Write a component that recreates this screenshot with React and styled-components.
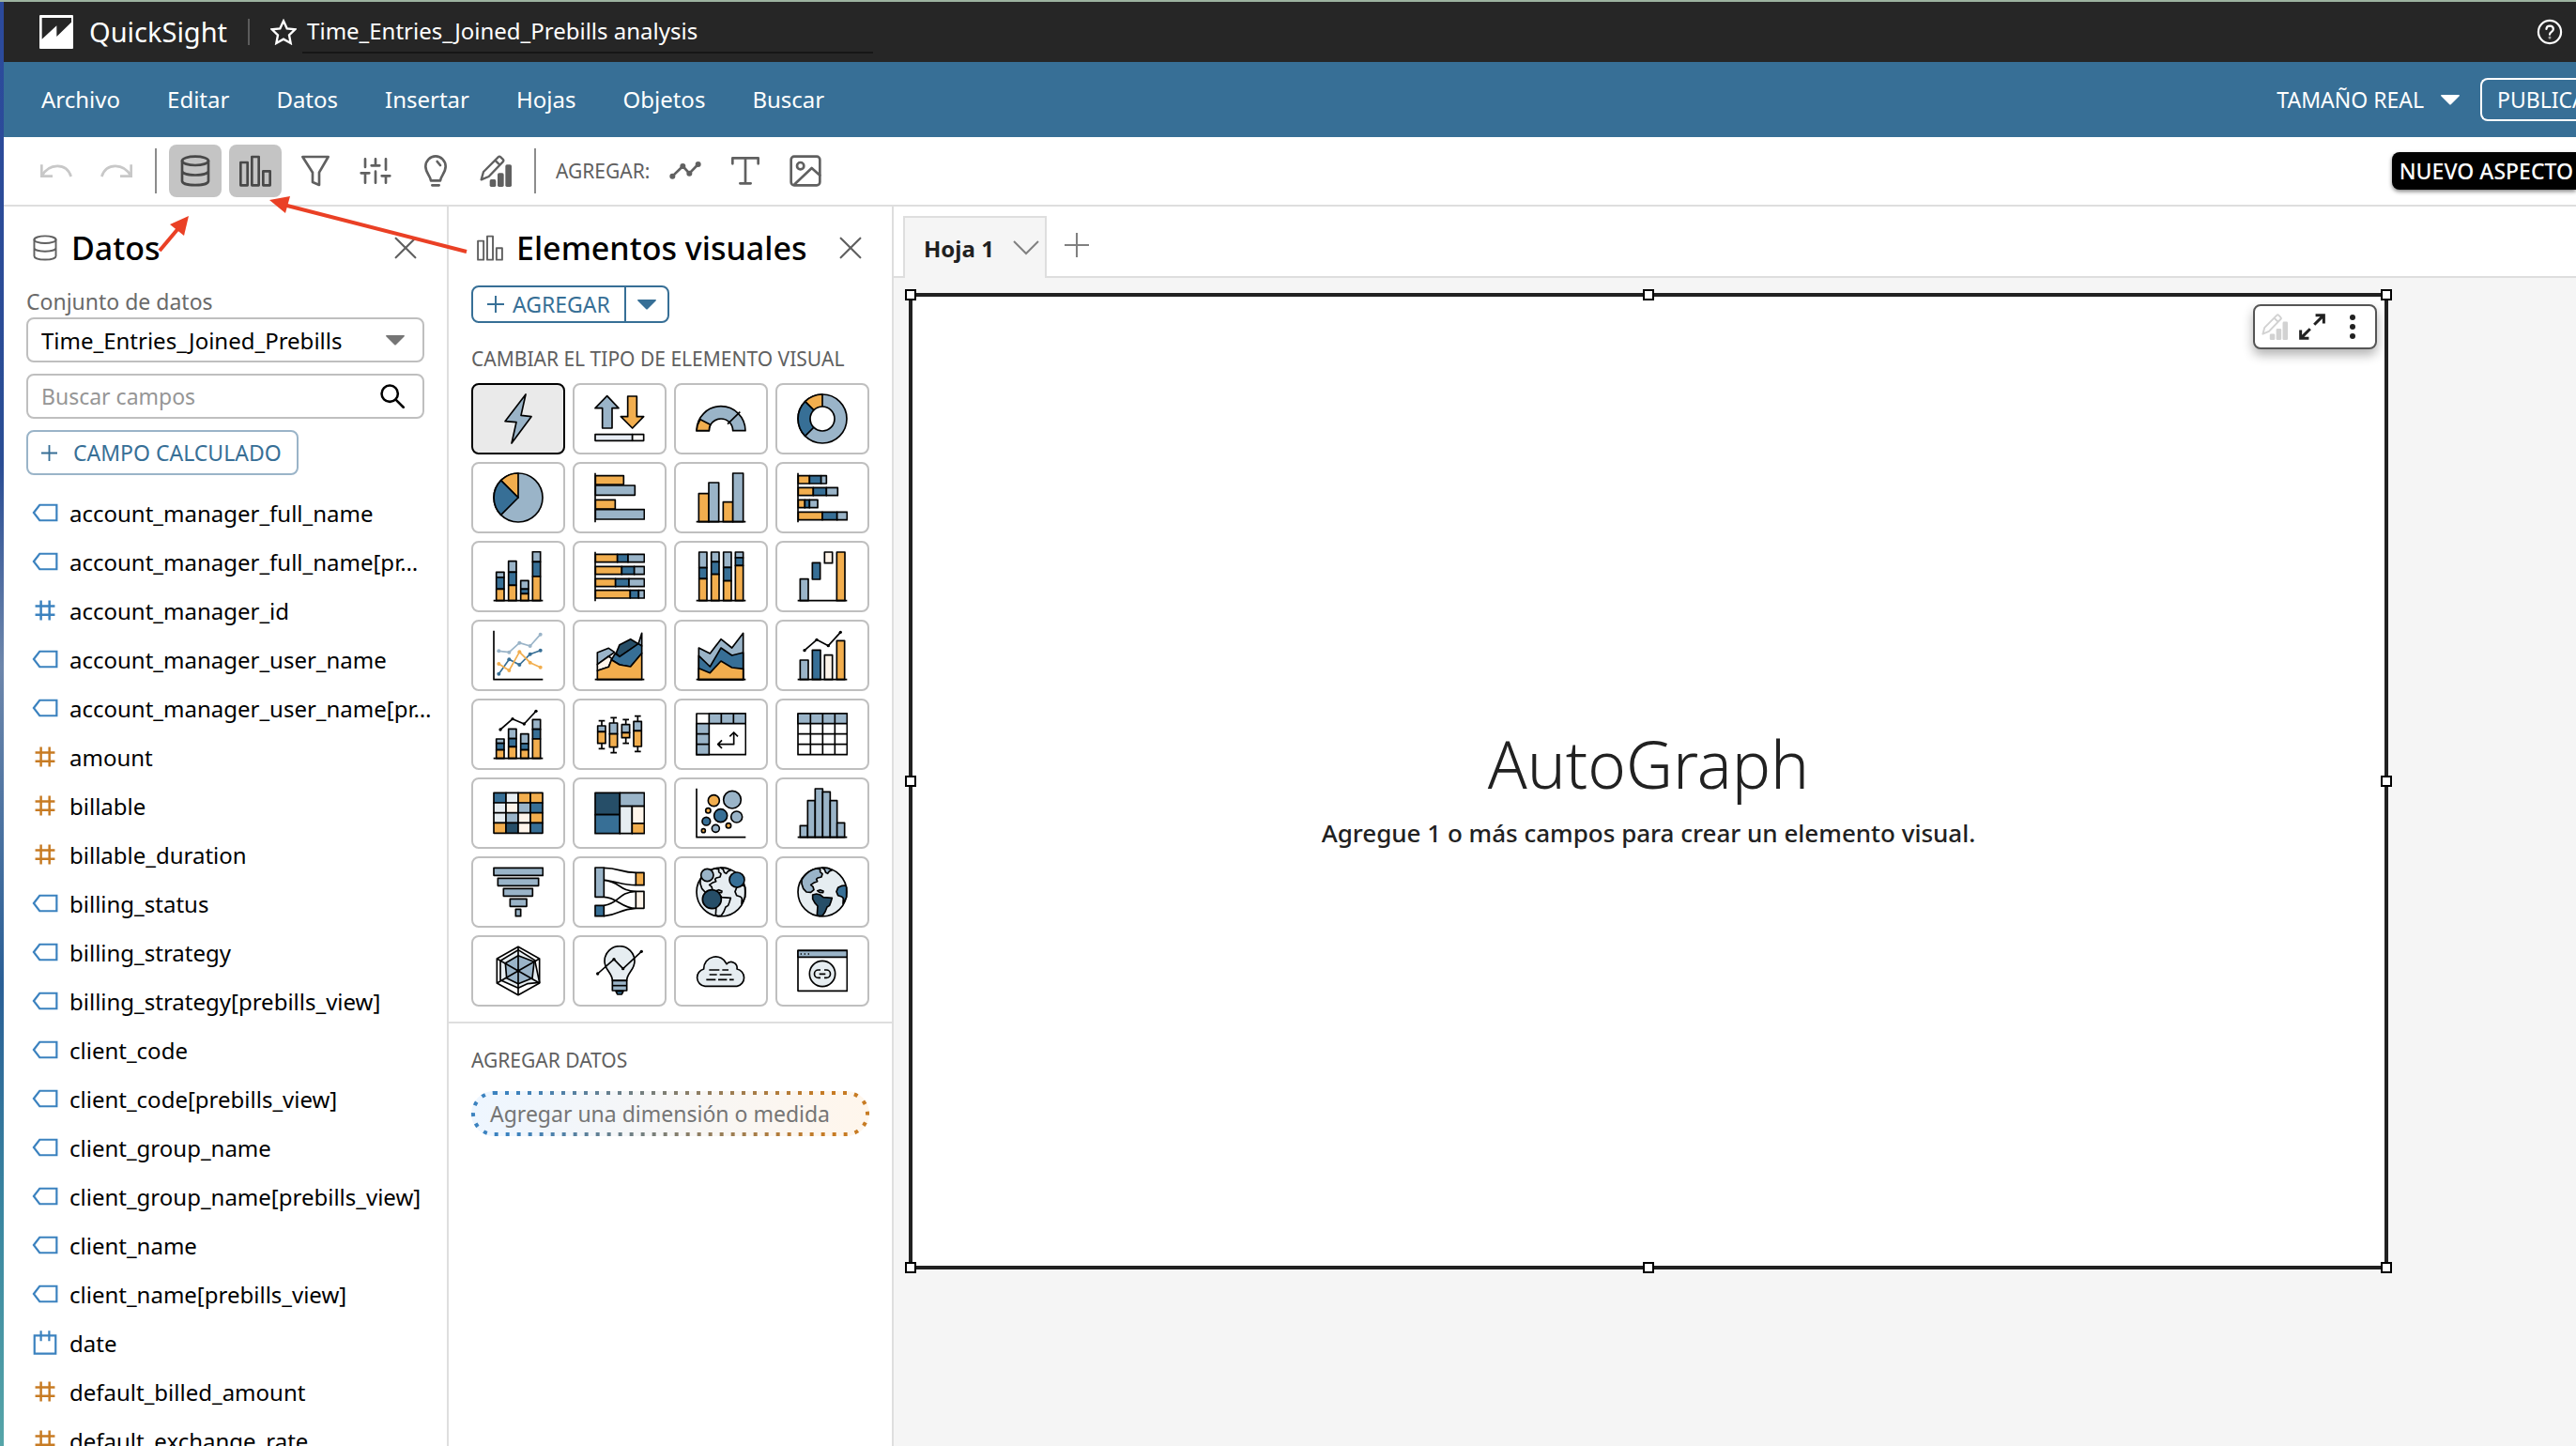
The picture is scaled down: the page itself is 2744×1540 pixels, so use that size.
// AnalysisEditor
import React from 'react';
import styled, { createGlobalStyle, ThemeProvider } from 'styled-components';

const theme = {
  colors : {
    header : '#262626',
    primary : '#376f96',
    line : '#dedede',
    border : '#bfbfbf',
    text : '#000000',
    soft : '#606060',
    dimension : '#3b82bf',
    measure : '#c77b23',
    canvas : '#f5f5f5',
    marker : '#ea4025',
  },
  size : {
    small : '21px',
    label : '23px',
    base : '24px',
    lead : '26px',
    brand : '29px',
    title : '34px',
    hero : '69px',
  },
};

const ink = '#000000';
const light = '#9ab4c8';
const blue = '#376f96';
const navy = '#264e68';
const pale = '#e6edf1';
const cream = '#fff5ea';
const orange = '#f2ae4e';

const GlobalStyle = createGlobalStyle`
  * { box-sizing : border-box; }
  body {
    margin : 0;
    font-family : 'Noto Sans', 'Open Sans', sans-serif;
    font-size : 23px;
    color : #000;
  }
  button, input, select { font : inherit; color : inherit; }
  h1, h2, h3, p, ul { margin : 0; padding : 0; }
`;

const Desktop = styled.div`
  height : 100vh;
  padding-left : 4px;
  border-top : 2px solid #9db3a0;
  background : linear-gradient(#2c4a9c, #2a4d94 32%, #6d86ab 46%, #2a5f96 68%, #3a86a0 84%, #56a5a8);
  overflow : hidden;
`;

const Window = styled.div`
  position : relative;
  display : flex;
  flex-direction : column;
  height : 100%;
  background : white;
`;

/* header */

const Header = styled.header`
  display : flex;
  align-items : center;
  flex : none;
  height : 64px;
  padding : 0 14px 0 38px;
  background : ${ p => p.theme.colors.header };
  color : white;
`;

const Brand = styled.a`
  display : flex;
  align-items : center;
  gap : 17px;
  color : inherit;
  font-size : ${ p => p.theme.size.brand };
  line-height : 40px;
  text-decoration : none;
`;

const HeaderRule = styled.div`
  width : 2px;
  height : 28px;
  margin : 0 22px;
  background : #5c5c5c;
`;

const IconButton = styled.button`
  display : flex;
  align-items : center;
  justify-content : center;
  padding : 0;
  border : 0;
  background : none;
  color : ${ p => p.$color || 'inherit' };
  margin-left : ${ p => p.$push ? 'auto' : 0 };
`;

const AnalysisTitle = styled.div`
  display : flex;
  align-items : center;
  gap : 6px;
`;

const AnalysisName = styled.h1`
  width : 608px;
  padding : 8px 0 8px 5px;
  border-bottom : 2px solid #161616;
  font-size : ${ p => p.theme.size.base };
  font-weight : 400;
  line-height : 28px;
`;

/* menu */

const MenuBar = styled.nav`
  display : flex;
  align-items : center;
  flex : none;
  gap : 50px;
  height : 80px;
  padding-left : 40px;
  background : ${ p => p.theme.colors.primary };
  color : white;
`;

const MenuItem = styled.button`
  padding : 0;
  border : 0;
  background : none;
  font-size : ${ p => p.theme.size.base };
  line-height : 32px;
`;

const MenuActions = styled.div`
  display : flex;
  align-items : center;
  gap : 22px;
  margin-left : auto;
`;

const ZoomButton = styled.button`
  display : flex;
  align-items : center;
  gap : 18px;
  padding : 0;
  border : 0;
  background : none;
  font-size : ${ p => p.theme.size.label };
`;

const PublishButton = styled.button`
  width : 102px;
  height : 46px;
  padding : 0 0 0 16px;
  border : 2px solid white;
  border-right : 0;
  border-radius : 8px 0 0 8px;
  background : none;
  font-size : ${ p => p.theme.size.label };
  text-align : left;
  overflow : hidden;
`;

/* toolbar */

const Toolbar = styled.div`
  display : flex;
  align-items : center;
  flex : none;
  gap : 8px;
  height : 74px;
  padding-left : 28px;
  border-bottom : 2px solid ${ p => p.theme.colors.line };
`;

const Tool = styled.button`
  display : flex;
  align-items : center;
  justify-content : center;
  width : 56px;
  height : 56px;
  padding : 0;
  border : 0;
  border-radius : 8px;
  background : ${ p => p.$active ? '#c4c4c4' : 'none' };
  color : ${ p => p.$active ? '#484848' : '#606060' };

  &:disabled { color : #c8c8c8; }
`;

const ToolRule = styled.div`
  width : 2px;
  height : 48px;
  margin : 0 5px;
  background : #8c8c8c;
`;

const ToolLabel = styled.span`
  margin : 0 2px 0 8px;
  color : ${ p => p.theme.colors.soft };
  font-size : ${ p => p.theme.size.small };
`;

const NewLook = styled.button`
  height : 40px;
  margin-left : auto;
  padding : 0 3px 0 8px;
  border : 0;
  border-radius : 8px 0 0 8px;
  background : black;
  box-shadow : 0 2px 4px rgba(0, 0, 0, 0.5);
  color : white;
  font-size : ${ p => p.theme.size.label };
  font-weight : 500;
`;

/* panels */

const Workspace = styled.div`
  display : flex;
  flex : 1;
  min-height : 0;
`;

const Panel = styled.section`
  flex : none;
  width : 474px;
  border-right : 2px solid ${ p => p.theme.colors.line };
  overflow : hidden;
`;

const PanelHeader = styled.div`
  display : flex;
  align-items : center;
  gap : 14px;
  height : 80px;
  padding : 8px 32px 0 30px;
  color : ${ p => p.theme.colors.soft };
`;

const PanelTitle = styled.h2`
  flex : 1;
  color : ${ p => p.theme.colors.text };
  font-size : ${ p => p.theme.size.title };
  font-weight : 500;
  line-height : 44px;
`;

const DataForm = styled.div`
  display : grid;
  gap : 12px;
  padding : 4px 24px 14px;
`;

const Label = styled.label`
  display : block;
  color : #6a6a6a;
  line-height : 34px;
`;

/* the control and its icon share one grid cell */
const Field = styled.div`
  display : grid;
  align-items : center;
  height : 48px;
  border : 2px solid ${ p => p.theme.colors.border };
  border-radius : 8px;

  > * { grid-area : 1 / 1; }
  > svg {
    justify-self : end;
    margin-right : 19px;
    pointer-events : none;
  }
`;

const Select = styled.select`
  width : 100%;
  height : 44px;
  padding : 0 14px;
  border : 0;
  background : none;
  font-size : ${ p => p.theme.size.base };
  appearance : none;
`;

const SearchInput = styled.input`
  width : 100%;
  height : 44px;
  padding : 0 14px;
  border : 0;
  background : none;

  &::placeholder { color : #969696; opacity : 1; }
`;

const CalculatedButton = styled.button`
  display : flex;
  align-items : center;
  justify-self : start;
  gap : 17px;
  height : 48px;
  padding : 0 16px 0 14px;
  border : 2px solid ${ light };
  border-radius : 8px;
  background : none;
  color : ${ p => p.theme.colors.primary };
  font-size : ${ p => p.theme.size.label };
`;

const FieldList = styled.ul`
  list-style : none;
  font-size : ${ p => p.theme.size.base };
`;

const FieldRow = styled.li`
  display : flex;
  align-items : center;
  gap : 12px;
  height : 52px;
  padding-left : 30px;
  color : ${ p => p.theme.colors[p.$kind] };

  svg { flex : none; }
`;

const FieldName = styled.span`
  color : ${ p => p.theme.colors.text };
  white-space : nowrap;
`;

const SectionLabel = styled.h3`
  color : ${ p => p.theme.colors.soft };
  font-size : ${ p => p.theme.size.small };
  font-weight : 400;
  line-height : 28px;
`;

const VisualTools = styled.div`
  padding : 4px 24px 16px;
  border-bottom : 2px solid ${ p => p.theme.colors.line };

  ${ SectionLabel } { margin-top : 24px; }
`;

const SplitButton = styled.div`
  display : flex;
  width : fit-content;
  height : 40px;
  border : 2px solid ${ p => p.theme.colors.primary };
  border-radius : 8px;
  color : ${ p => p.theme.colors.primary };
`;

const SplitPart = styled.button`
  display : flex;
  align-items : center;
  gap : 9px;
  padding : 0 ${ p => p.$narrow ? '12px' : '15px' };
  border : 0;
  background : none;
  font-size : ${ p => p.theme.size.label };

  & + & { border-left : 2px solid ${ p => p.theme.colors.primary }; }
`;

const VisualGrid = styled.div`
  display : grid;
  grid-template-columns : repeat(4, 1fr);
  gap : 8px;
  margin-top : 12px;
`;

const VisualType = styled.button`
  display : flex;
  align-items : center;
  justify-content : center;
  height : 76px;
  padding : 0;
  border : 2px solid ${ p => p.$active ? 'black' : p.theme.colors.border };
  border-radius : 8px;
  background : ${ p => p.$active ? '#eaeaea' : 'white' };
`;

const WellArea = styled.div`
  padding : 25px 24px;
`;

const Well = styled.button`
  position : relative;
  display : block;
  width : 100%;
  height : 48px;
  margin-top : 19px;
  padding : 0 20px;
  border : 0;
  border-radius : 24px;
  background : linear-gradient(90deg, #eef6ff, #fff6ec);
  color : #757575;
  text-align : left;
`;

const WellOutline = styled.svg`
  position : absolute;
  inset : 0;
  width : 100%;
  height : 100%;

  rect {
    width : calc(100% - 4px);
    height : calc(100% - 4px);
  }
`;

/* sheet */

const Sheet = styled.main`
  display : flex;
  flex : 1;
  flex-direction : column;
  min-width : 0;
  background : ${ p => p.theme.colors.canvas };
`;

const TabBar = styled.div`
  display : flex;
  align-items : flex-end;
  gap : 19px;
  height : 76px;
  padding-left : 10px;
  border-bottom : 2px solid ${ p => p.theme.colors.line };
  background : white;
`;

const Tab = styled.button`
  display : flex;
  align-items : center;
  gap : 20px;
  height : 66px;
  margin-bottom : -2px;
  padding : 0 6px 0 20px;
  border : 2px solid ${ p => p.theme.colors.line };
  border-bottom : 0;
  background : ${ p => p.theme.colors.canvas };
  color : #212121;
  font-size : ${ p => p.theme.size.base };
  font-weight : 700;
`;

const AddTab = styled.button`
  height : 60px;
  padding : 0;
  border : 0;
  background : none;
  color : #808080;
`;

const Visual = styled.article`
  position : relative;
  display : flex;
  flex-direction : column;
  align-items : center;
  justify-content : center;
  margin : 16px 200px 0 16px;
  padding-top : 22px;
  aspect-ratio : 197 / 130;
  border : 4px solid #212121;
  background : white;
  color : #212121;
`;

const Handle = styled.span`
  position : absolute;
  left : ${ p => p.$x };
  top : ${ p => p.$y };
  width : 12px;
  height : 12px;
  border : 2px solid black;
  background : white;
  transform : translate(-50%, -50%);
`;

const VisualMenu = styled.div`
  position : absolute;
  top : 8px;
  right : 8px;
  display : flex;
  align-items : center;
  gap : 12px;
  width : 132px;
  height : 48px;
  padding : 0 21px 0 7px;
  border : 2px solid #555;
  border-radius : 8px;
  background : white;
  box-shadow : 0 6px 12px rgba(0, 0, 0, 0.3);
`;

const Hero = styled.h2`
  font-size : ${ p => p.theme.size.hero };
  font-weight : 300;
  line-height : 88px;
`;

const Hint = styled.p`
  font-size : ${ p => p.theme.size.lead };
  font-weight : 500;
  line-height : 60px;
`;

const Markers = styled.svg`
  position : absolute;
  top : 0;
  left : 0;
  pointer-events : none;
`;

/* line icons, all drawn round the centre of the box */

const Icon = ({ size = 34, stroke = 8, children }) => (
  <svg
    width={size}
    height={size}
    viewBox="-51 -51 102 102"
    fill="none"
    stroke="currentColor"
    strokeWidth={stroke}
    strokeLinecap="round"
    strokeLinejoin="round"
    aria-hidden="true"
  >
    {children}
  </svg>
);

const DataIcon = p => (
  <Icon {...p}>
    <ellipse cy="-32" rx="42" ry="14" />
    <path d="M-42 -32V32C-42 50 42 50 42 32V-32M-42 0C-42 18 42 18 42 0" />
  </Icon>
);

const BarsIcon = p => (
  <Icon {...p}>
    <path d="M-47 -27h22v73h-22zM-11 -45h22v91h-22zM25 1h22v45h-22z" />
  </Icon>
);

const PencilChartIcon = p => (
  <Icon {...p} stroke={7}>
    <path d="M-46 28L-39 3L8 -44Q12 -48 16 -44L23 -37Q27 -33 23 -29L-22 18ZM-2 -34L13 -19" />
    <g fill="currentColor" stroke="none">
      <rect x="-19" y="27" width="20" height="24" rx="5" />
      <rect x="6" y="7" width="20" height="44" rx="5" />
      <rect x="31" y="-20" width="20" height="71" rx="5" />
    </g>
  </Icon>
);

const UndoIcon = () => (
  <Icon>
    <path strokeLinecap="butt" strokeLinejoin="miter" d="M-47 -20V17H-12M-46 16C-24 -24 32 -28 47 18" />
  </Icon>
);

const RedoIcon = () => (
  <Icon>
    <path strokeLinecap="butt" strokeLinejoin="miter" d="M47 -20V17H12M46 16C24 -24 -32 -28 -47 18" />
  </Icon>
);

const PlusIcon = ({ size = 18, stroke = 11 }) => (
  <Icon size={size} stroke={stroke}><path strokeLinecap="butt" d="M-51 0H51M0 -51V51" /></Icon>
);

const CloseIcon = () => (
  <Icon size={24} stroke={9}><path d="M-44 -44L44 44M44 -44L-44 44" /></Icon>
);

const Caret = ({ color = 'currentColor' }) => (
  <svg width="20" height="11" viewBox="0 0 20 11" fill={color} aria-hidden="true">
    <path d="M1 0H19Q21 0 19 2L11 10Q10 11 9 10L1 2Q-1 0 1 0Z" />
  </svg>
);

const HashIcon = () => (
  <Icon size={28} stroke={9}>
    <path strokeLinecap="butt" d="M-16 -38V38M17 -38V38M-38 -16H38M-38 17H38" />
  </Icon>
);

const TagIcon = () => (
  <Icon size={28} stroke={8}>
    <path strokeLinejoin="miter" d="M-44 0L-21 -30H45V30H-21Z" />
  </Icon>
);

const DateIcon = () => (
  <Icon size={28} stroke={8}>
    <path strokeLinecap="butt" strokeLinejoin="miter" d="M-41 -28H41V42H-41ZM-16 -46V-6M16 -46V-6" />
  </Icon>
);

const kinds = {
  tag : { kind : 'dimension', icon : <TagIcon /> },
  id : { kind : 'dimension', icon : <HashIcon /> },
  date : { kind : 'dimension', icon : <DateIcon /> },
  number : { kind : 'measure', icon : <HashIcon /> },
};

const fields = [
  ['account_manager_full_name', 'tag'],
  ['account_manager_full_name[pr…', 'tag'],
  ['account_manager_id', 'id'],
  ['account_manager_user_name', 'tag'],
  ['account_manager_user_name[pr…', 'tag'],
  ['amount', 'number'],
  ['billable', 'number'],
  ['billable_duration', 'number'],
  ['billing_status', 'tag'],
  ['billing_strategy', 'tag'],
  ['billing_strategy[prebills_view]', 'tag'],
  ['client_code', 'tag'],
  ['client_code[prebills_view]', 'tag'],
  ['client_group_name', 'tag'],
  ['client_group_name[prebills_view]', 'tag'],
  ['client_name', 'tag'],
  ['client_name[prebills_view]', 'tag'],
  ['date', 'date'],
  ['default_billed_amount', 'number'],
  ['default_exchange_rate', 'number'],
];

/* chart glyphs */

const Box = ({ at, fill }) => (
  <rect x={at[0]} y={at[1]} width={at[2]} height={at[3]} fill={fill} />
);

// rows : [y, end of orange, end of blue, end of light]
const StackedRows = ({ rows }) => rows.map(([y, a, b, c]) => (
  <g key={y}>
    <Box at={[4, y, a - 4, 25]} fill={orange} />
    <Box at={[a, y, b - a, 25]} fill={blue} />
    <Box at={[b, y, c - b, 25]} fill={light} />
  </g>
));

// columns : [x, top of light, top of blue, top of orange]
const StackedColumns = ({ columns }) => columns.map(([x, a, b, c]) => (
  <g key={x}>
    <Box at={[x, a, 25, b - a]} fill={light} />
    <Box at={[x, b, 25, c - b]} fill={blue} />
    <Box at={[x, c, 25, 158 - c]} fill={orange} />
  </g>
));

const Dots = ({ points, color = ink, r = 5 }) => (
  <g>
    <polyline points={points.join(' ')} fill="none" stroke={color} />
    {points.map(([x, y]) => (
      <circle key={x} cx={x} cy={y} r={r} fill={color} stroke="none" />
    ))}
  </g>
);

const Base = () => <path d="M2 158H160" />;
const Side = () => <path d="M3 2V160" />;
const Axes = () => <path d="M3 2V158H160" fill="none" />;

const Globe = ({ colored }) => (
  <g>
    <circle cx="81" cy="81" r="78" fill={pale} />
    <path
      fill={colored ? light : 'none'}
      d="M50 10L62 6L74 8V17L81 23L78 33L66 36L62 40L65 47L53 52L44 58L51 64L54 74L44 82L30 81L20 70L15 55V42Q28 20 50 10Z"
    />
    <path fill={colored ? light : 'none'} d="M80 3L88 9L92 19L98 22L103 15L112 11L100 5Z" />
    <path fill={colored ? light : 'none'} d="M65 77L74 74L84 78L83 83L72 82Z" />
    <path
      fill={colored ? navy : 'none'}
      d="M50 90L62 87L74 90L84 98L112 100L108 113L104 124L96 129L90 144L82 156L72 158L64 154L66 126L57 116L50 103Z"
    />
    <path
      fill={colored ? blue : 'none'}
      d="M155 60L144 61L131 67L126 80L131 92L143 96L148 101L147 118L158 98V66Z"
    />
  </g>
);

const heat = [
  [blue, pale, orange, orange],
  [pale, cream, light, blue],
  [pale, light, cream, orange],
  [orange, navy, cream, blue],
];

const boxes = [
  [11, 38, 54, 73, 110, 127],
  [49, 28, 45, 80, 122, 140],
  [88, 34, 50, 76, 92, 110],
  [126, 23, 40, 70, 120, 136],
];

const bubbles = [
  [58, 41, 18, orange],
  [117, 38, 28, light],
  [40, 73, 8, orange],
  [80, 89, 21, blue],
  [131, 93, 18, light],
  [34, 107, 13, blue],
  [105, 121, 8, orange],
  [64, 130, 12, light],
  [25, 137, 6, orange],
];

const steps = [[10, 24, 121], [34, 24, 41], [58, 24, 3], [82, 24, 13], [106, 22, 41], [128, 24, 112]];

const visuals = [
  ['AutoGraph', <polygon points="105,3 90,70 123,74 60,159 75,92 39,89" fill={light} />],
  ['KPI', (
    <g>
      <polygon points="41,8 78,47 57,47 57,111 26,111 26,47 3,47" fill={light} />
      <polygon points="107,9 136,9 136,74 158,74 122,111 85,74 107,74" fill={orange} />
      <Box at={[3, 131, 119, 20]} fill="#e8eef6" />
      <Box at={[122, 131, 36, 20]} fill="white" />
    </g>
  )],
  ['Indicador', (
    <g>
      <path d="M3 119A78 78 0 0 1 159 119H119A38 38 0 0 0 43 119Z" fill={light} />
      <path d="M3 119A78 78 0 0 1 15 83L47 100A38 38 0 0 0 43 119Z" fill={orange} />
      <path d="M102 98L142 59" />
    </g>
  )],
  ['Anillos', (
    <g>
      <circle cx="81" cy="81" r="78" fill={light} />
      <path d="M81 81V3A78 78 0 0 0 26 26Z" fill={orange} />
      <path d="M81 81L26 26A78 78 0 0 0 26 136Z" fill={blue} />
      <circle cx="81" cy="81" r="39" fill="white" />
    </g>
  )],
  ['Circular', (
    <g>
      <circle cx="81" cy="81" r="78" fill={light} />
      <path d="M81 81V3A78 78 0 0 0 26 26Z" fill={orange} />
      <path d="M81 81L26 26A78 78 0 0 0 26 136Z" fill={blue} />
    </g>
  )],
  ['Barras horizontales', (
    <g>
      <Box at={[4, 11, 90, 28]} fill={orange} />
      <Box at={[4, 42, 126, 31]} fill={light} />
      <Box at={[4, 88, 63, 29]} fill={orange} />
      <Box at={[4, 119, 156, 31]} fill={light} />
      <Side />
    </g>
  )],
  ['Barras verticales', (
    <g>
      <Box at={[10, 68, 32, 90]} fill={orange} />
      <Box at={[42, 33, 32, 125]} fill={light} />
      <Box at={[88, 95, 31, 63]} fill={orange} />
      <Box at={[119, 3, 33, 155]} fill={light} />
      <Base />
    </g>
  )],
  ['Barras horizontales apiladas', (
    <g>
      <StackedRows rows={[[11, 40, 77, 94], [49, 52, 94, 130], [88, 25, 40, 66], [127, 81, 128, 160]]} />
      <Side />
    </g>
  )],
  ['Barras verticales apiladas', (
    <g>
      <StackedColumns columns={[[11, 67, 84, 121], [50, 32, 67, 109], [89, 94, 121, 136], [127, 2, 34, 81]]} />
      <Base />
    </g>
  )],
  ['Barras horizontales apiladas 100%', (
    <g>
      <StackedRows rows={[[10, 74, 108, 160], [49, 88, 128, 160], [88, 68, 111, 160], [125, 115, 142, 160]]} />
      <Side />
    </g>
  )],
  ['Barras verticales apiladas 100%', (
    <g>
      <StackedColumns columns={[[11, 3, 53, 88], [50, 3, 34, 74], [89, 3, 52, 95], [127, 3, 21, 46]]} />
      <Base />
    </g>
  )],
  ['Cascada', (
    <g>
      <Box at={[10, 89, 26, 69]} fill={light} />
      <Box at={[49, 37, 25, 53]} fill={blue} />
      <Box at={[88, 3, 25, 35]} fill={cream} />
      <Box at={[127, 3, 26, 155]} fill={orange} />
      <Base />
    </g>
  )],
  ['Líneas', (
    <g>
      <Axes />
      <Dots color={light} r={6} points={[[19, 67], [52, 71], [85, 41], [119, 51], [152, 14]]} />
      <Dots color={blue} r={6} points={[[19, 140], [52, 94], [85, 111], [119, 77], [152, 65]]} />
      <Dots color={orange} r={6} points={[[19, 108], [52, 129], [85, 70], [119, 104], [152, 119]]} />
    </g>
  )],
  ['Áreas', (
    <g>
      <polygon points="10,72 46,58 65,71 46,84 10,110" fill={light} />
      <polygon points="10,110 46,84 57,92 46,118 10,130" fill={cream} />
      <polygon points="70,74 81,47 116,29 141,44 116,61 81,85" fill={navy} />
      <polygon points="141,44 152,10 152,51" fill={light} />
      <polygon points="67,75 81,85 116,61 141,44 152,51 152,74 116,117 81,111 55,95" fill={blue} />
      <polygon points="10,130 46,118 55,95 81,111 116,117 152,74 152,158 10,158" fill={orange} />
      <Base />
    </g>
  )],
  ['Áreas apiladas', (
    <g>
      <polygon points="10,57 46,75 81,29 116,57 152,10 152,158 10,158" fill={light} />
      <polygon points="10,82 46,117 81,57 116,81 152,72 152,158 10,158" fill={blue} />
      <polygon points="10,122 46,137 81,99 116,120 152,124 152,158 10,158" fill={orange} />
      <Base />
    </g>
  )],
  ['Combinado', (
    <g>
      <Box at={[10, 96, 26, 62]} fill={light} />
      <Box at={[49, 64, 26, 94]} fill={blue} />
      <Box at={[88, 80, 25, 78]} fill={cream} />
      <Box at={[127, 34, 25, 124]} fill={orange} />
      <Dots points={[[24, 65], [63, 31], [100, 50], [139, 7]]} />
      <Base />
    </g>
  )],
  ['Combinado apilado', (
    <g>
      <StackedColumns columns={[[11, 96, 110, 131], [50, 64, 95, 121], [89, 80, 111, 131], [127, 34, 65, 96]]} />
      <Dots points={[[24, 66], [63, 32], [100, 48], [138, 7]]} />
      <Base />
    </g>
  )],
  ['Cajas', (
    <g>
      {boxes.map(([x, low, a, b, c, high]) => (
        <g key={x}>
          <path d={`M${x + 3} ${low}h20M${x + 13} ${low}V${high}M${x + 3} ${high}h20`} />
          <Box at={[x, a, 25, b - a]} fill={light} />
          <Box at={[x, b, 25, c - b]} fill={orange} />
        </g>
      ))}
    </g>
  )],
  ['Tabla dinámica', (
    <g>
      <Box at={[3, 15, 157, 131]} fill="white" />
      <Box at={[43, 15, 117, 32]} fill={light} />
      <Box at={[3, 47, 40, 99]} fill={light} />
      <path d="M82 15V47M121 15V47M3 80H43M3 113H43" />
      <path d="M122 75V113H71M84 100L71 113L84 126M109 88L122 75L135 88" fill="none" />
    </g>
  )],
  ['Tabla', (
    <g>
      <Box at={[3, 15, 157, 131]} fill="white" />
      <Box at={[3, 15, 157, 32]} fill={light} />
      <path d="M43 15V146M82 15V146M121 15V146M3 80H160M3 113H160" />
    </g>
  )],
  ['Mapa térmico', (
    <g>
      {heat.map((row, y) => row.map((color, x) => (
        <Box key={`${x}-${y}`} at={[3 + x * 39, 16 + y * 32, 39, 33]} fill={color} />
      )))}
    </g>
  )],
  ['Rectángulos', (
    <g>
      <Box at={[3, 16, 79, 70]} fill={navy} />
      <Box at={[3, 86, 79, 60]} fill={blue} />
      <Box at={[82, 16, 78, 43]} fill={light} />
      <Box at={[82, 59, 39, 87]} fill={pale} />
      <Box at={[121, 59, 39, 55]} fill={cream} />
      <Box at={[121, 114, 39, 32]} fill={orange} />
    </g>
  )],
  ['Dispersión', (
    <g>
      <Axes />
      {bubbles.map(([x, y, r, fill]) => <circle key={x} cx={x} cy={y} r={r} fill={fill} />)}
    </g>
  )],
  ['Histograma', (
    <g>
      {steps.map(([x, w, y]) => <Box key={x} at={[x, y, w, 158 - y]} fill={light} />)}
      <Base />
    </g>
  )],
  ['Embudo', (
    <g>
      <Box at={[3, 4, 157, 24]} fill={light} />
      <Box at={[16, 37, 130, 24]} fill={light} />
      <Box at={[34, 70, 93, 24]} fill={light} />
      <Box at={[55, 103, 53, 24]} fill={light} />
      <Box at={[73, 136, 16, 22]} fill={light} />
    </g>
  )],
  ['Sankey', (
    <g>
      <path
        fill="none"
        d="M31 4C80 4 85 19 133 19M31 43C70 46 90 59 133 59M31 43C85 48 80 79 133 79M31 97C75 98 85 133 133 133M31 124C80 118 75 82 133 79M31 158C80 154 80 135 133 133"
      />
      <Box at={[3, 3, 28, 94]} fill={light} />
      <Box at={[3, 124, 28, 34]} fill={blue} />
      <Box at={[133, 19, 26, 40]} fill={orange} />
      <Box at={[133, 79, 26, 54]} fill={cream} />
    </g>
  )],
  ['Puntos en mapa', (
    <g>
      <Globe />
      <circle cx="37" cy="27" r="20" fill={light} />
      <circle cx="132" cy="42" r="24" fill={blue} />
      <circle cx="52" cy="104" r="30" fill={navy} />
    </g>
  )],
  ['Mapa relleno', <Globe colored />],
  ['Radar', (
    <g>
      <polygon points="81,4 149,42 149,120 81,158 13,120 13,42" fill="white" />
      <polygon points="81,14 134,47 149,118 110,122 81,136 24,110 24,49" fill={pale} />
      <polygon points="81,32 132,52 126,104 81,122 44,104 40,56" fill={light} />
      <path d="M81 4V158M13 42L149 120M149 42L13 120" />
    </g>
  )],
  ['Información', (
    <g>
      <path d="M58 112C58 88 33 78 33 50A48 48 0 0 1 129 50C129 78 104 88 104 112Z" fill={pale} />
      <Box at={[58, 112, 46, 32]} fill={light} />
      <path d="M58 128H104" />
      <path d="M69 146H93L88 156H74Z" fill={blue} />
      <Dots points={[[11, 90], [63, 44], [92, 74], [151, 19]]} />
    </g>
  )],
  ['Nube de palabras', (
    <g>
      <path d="M30 130A28 28 0 0 1 26 75A38 38 0 0 1 99 59A19 19 0 0 1 132 75A28 28 0 0 1 132 130Z" fill={pale} />
      <path d="M43 78H76M85 78H105M44 93H68M77 93H115M34 109H64M72 109H100M108 109H122" />
    </g>
  )],
  ['Contenido personalizado', (
    <g>
      <Box at={[3, 16, 157, 129]} fill="white" />
      <Box at={[3, 16, 157, 21]} fill={light} />
      <path d="M11 27h4M23 27h4M35 27h4" />
      <circle cx="81" cy="90" r="41" fill={pale} />
      <path d="M75 78H68A12 12 0 0 0 68 103H75M87 78H94A12 12 0 0 1 94 103H87M71 91H91" fill="none" />
    </g>
  )],
];

const handles = ['-2px', '50%', 'calc(100% + 2px)'];

const App = () => (
  <ThemeProvider theme={theme}>
    <GlobalStyle />
    <Desktop>
      <Window>
        <Header>
          <Brand href="#">
            <svg width="36" height="36" viewBox="0 0 108 108" aria-hidden="true">
              <rect width="108" height="108" rx="3" fill="white" />
              <path d="M8 9H102V23L55 69V34L8 77Z" fill="#262626" />
            </svg>
            QuickSight
          </Brand>
          <HeaderRule />
          <AnalysisTitle>
            <IconButton aria-label="Favorito">
              <svg width="28" height="28" viewBox="5 0 84 84" fill="none" stroke="white" strokeWidth="7">
                <path d="M47 7L58 31L84 34L65 52L70 78L47 65L24 78L29 52L10 34L36 31Z" />
              </svg>
            </IconButton>
            <AnalysisName>Time_Entries_Joined_Prebills analysis</AnalysisName>
          </AnalysisTitle>
          <IconButton aria-label="Ayuda" $push>
            <Icon size={28} stroke={8}>
              <circle r="44" />
              <path d="M-13 -11C-12 -28 14 -27 14 -11C14 0 0 -1 0 10" />
              <circle cy="22" r="1" />
            </Icon>
          </IconButton>
        </Header>

        <MenuBar>
          {['Archivo', 'Editar', 'Datos', 'Insertar', 'Hojas', 'Objetos', 'Buscar'].map(v => (
            <MenuItem key={v}>{v}</MenuItem>
          ))}
          <MenuActions>
            <ZoomButton>TAMAÑO REAL <Caret /></ZoomButton>
            <PublishButton>PUBLICAR</PublishButton>
          </MenuActions>
        </MenuBar>

        <Toolbar>
          <Tool disabled aria-label="Deshacer"><UndoIcon /></Tool>
          <Tool disabled aria-label="Rehacer"><RedoIcon /></Tool>
          <ToolRule />
          <Tool $active aria-label="Datos"><DataIcon /></Tool>
          <Tool $active aria-label="Elementos visuales"><BarsIcon /></Tool>
          <Tool aria-label="Filtro">
            <Icon><path d="M-41 -45H41L12 5V45L-9 36V5Z" /></Icon>
          </Tool>
          <Tool aria-label="Parámetros">
            <Icon>
              <path d="M-33 -38V-12M-46 7H-20M-33 7V38M0 -38V-17M-13 -17H13M0 2V38M33 -38V-4M20 16H46M33 16V38" />
            </Icon>
          </Tool>
          <Tool aria-label="Información">
            <Icon>
              <path d="M-15 31C-17 15 -32 6 -32 -14A32 33 0 0 1 32 -14C32 6 17 15 15 31ZM-11 46H11M5 -30L15 -18" />
            </Icon>
          </Tool>
          <Tool aria-label="Crear elemento visual"><PencilChartIcon /></Tool>
          <ToolRule />
          <ToolLabel>AGREGAR:</ToolLabel>
          <Tool aria-label="Agregar elemento visual">
            <Icon>
              <path d="M-41 17L-8 -15L13 8L41 -21" />
              <g fill="currentColor" stroke="none">
                <circle cx="-41" cy="17" r="9" />
                <circle cx="-8" cy="-15" r="9" />
                <circle cx="13" cy="8" r="9" />
                <circle cx="41" cy="-21" r="9" />
              </g>
            </Icon>
          </Tool>
          <Tool aria-label="Agregar texto">
            <Icon><path d="M-41 -23V-41H41V-23M0 -41V40M-17 40H17" /></Icon>
          </Tool>
          <Tool aria-label="Agregar imagen">
            <Icon>
              <rect x="-46" y="-46" width="92" height="92" rx="10" />
              <circle cx="-16" cy="-16" r="11" />
              <path d="M-34 42L20 -9L46 14" />
            </Icon>
          </Tool>
          <NewLook>NUEVO ASPECTO</NewLook>
        </Toolbar>

        <Workspace>
          <Panel>
            <PanelHeader>
              <DataIcon size={28} stroke={7} />
              <PanelTitle>Datos</PanelTitle>
              <IconButton aria-label="Cerrar datos"><CloseIcon /></IconButton>
            </PanelHeader>
            <DataForm>
              <div>
                <Label htmlFor="dataset">Conjunto de datos</Label>
                <Field>
                  <Select id="dataset">
                    <option>Time_Entries_Joined_Prebills</option>
                  </Select>
                  <Caret color="#757575" />
                </Field>
              </div>
              <Field>
                <SearchInput type="text" placeholder="Buscar campos" aria-label="Buscar campos" />
                <Icon size={26} stroke={10}>
                  <circle cx="-11" cy="-11" r="34" />
                  <path d="M14 14L46 46" />
                </Icon>
              </Field>
              <CalculatedButton><PlusIcon size={17} />CAMPO CALCULADO</CalculatedButton>
            </DataForm>
            <FieldList>
              {fields.map(([name, type]) => (
                <FieldRow key={name} $kind={kinds[type].kind}>
                  {kinds[type].icon}
                  <FieldName>{name}</FieldName>
                </FieldRow>
              ))}
            </FieldList>
          </Panel>

          <Panel>
            <PanelHeader>
              <BarsIcon size={28} stroke={7} />
              <PanelTitle>Elementos visuales</PanelTitle>
              <IconButton aria-label="Cerrar elementos visuales"><CloseIcon /></IconButton>
            </PanelHeader>
            <VisualTools>
              <SplitButton>
                <SplitPart><PlusIcon />AGREGAR</SplitPart>
                <SplitPart $narrow aria-label="Más opciones"><Caret /></SplitPart>
              </SplitButton>
              <SectionLabel>CAMBIAR EL TIPO DE ELEMENTO VISUAL</SectionLabel>
              <VisualGrid>
                {visuals.map(([name, glyph], i) => (
                  <VisualType key={name} $active={i === 0} aria-label={name}>
                    <svg
                      width="54"
                      height="54"
                      viewBox="0 0 162 162"
                      stroke={ink}
                      strokeWidth="5"
                      strokeLinejoin="round"
                    >
                      {glyph}
                    </svg>
                  </VisualType>
                ))}
              </VisualGrid>
            </VisualTools>
            <WellArea>
              <SectionLabel>AGREGAR DATOS</SectionLabel>
              <Well>
                <WellOutline aria-hidden="true">
                  <defs>
                    <linearGradient id="well">
                      <stop offset="0.1" stopColor={theme.colors.dimension} />
                      <stop offset="0.9" stopColor={theme.colors.measure} />
                    </linearGradient>
                  </defs>
                  <rect x="2" y="2" rx="22" fill="none" stroke="url(#well)" strokeWidth="4" strokeDasharray="4 8" />
                </WellOutline>
                Agregar una dimensión o medida
              </Well>
            </WellArea>
          </Panel>

          <Sheet>
            <TabBar>
              <Tab>
                Hoja 1
                <svg width="28" height="16" viewBox="0 0 28 16" fill="none" stroke="#808080" strokeWidth="2">
                  <path d="M1 1L14 14L27 1" />
                </svg>
              </Tab>
              <AddTab aria-label="Agregar hoja"><PlusIcon size={26} stroke={8} /></AddTab>
            </TabBar>
            <Visual>
              <Hero>AutoGraph</Hero>
              <Hint>Agregue 1 o más campos para crear un elemento visual.</Hint>
              <VisualMenu>
                <IconButton aria-label="Editar elemento visual" $color="#d2d2d2">
                  <PencilChartIcon size={28} />
                </IconButton>
                <IconButton aria-label="Maximizar">
                  <Icon size={28} stroke={11}>
                    <path strokeLinecap="butt" strokeLinejoin="miter" d="M8 -8L44 -44M13 -45H45V-13M-8 8L-44 44M-13 45H-45V13" />
                  </Icon>
                </IconButton>
                <IconButton aria-label="Opciones" $push>
                  <svg width="6" height="28" viewBox="0 0 6 28" fill="#212121">
                    <circle cx="3" cy="4" r="3" />
                    <circle cx="3" cy="14" r="3" />
                    <circle cx="3" cy="24" r="3" />
                  </svg>
                </IconButton>
              </VisualMenu>
              {handles.map(x => handles.map(y => (
                (x !== '50%' || y !== '50%') && <Handle key={x + y} $x={x} $y={y} />
              )))}
            </Visual>
          </Sheet>
        </Workspace>

        <Markers width="520" height="300" fill={theme.colors.marker} aria-hidden="true">
          <path d="M166 265L187 240" stroke={theme.colors.marker} strokeWidth="4" />
          <path d="M197 228L177 237L192 249Z" />
          <path d="M493 266L298 216" stroke={theme.colors.marker} strokeWidth="4" />
          <path d="M283 211L305 207L300 225Z" />
        </Markers>
      </Window>
    </Desktop>
  </ThemeProvider>
);

export default App;
